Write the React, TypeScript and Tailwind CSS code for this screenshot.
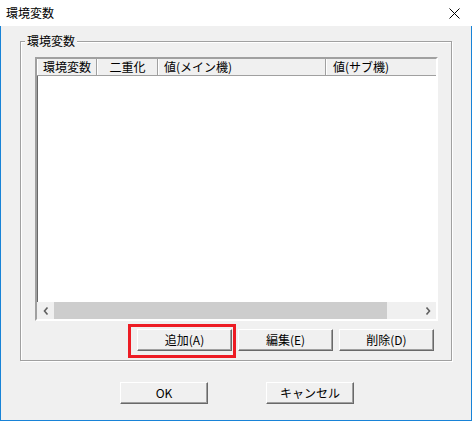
import React from 'react'

const columns = [
  { label: '環境変数', width: 'w-[60px]', align: 'justify-center' },
  { label: '二重化', width: 'w-[61px]', align: 'justify-center' },
  { label: '値(メイン機)', width: 'w-[168px]', align: 'justify-start pl-[5px]' },
  { label: '値(サブ機)', width: 'w-[120px]', align: 'justify-start pl-[6px]' },
]

const Button: React.FC<{ label: string; className?: string }> = ({ label, className = '' }) => (
  <div
    className={`relative h-[22px] flex items-center justify-center bg-[#f0f0f0] border border-t-white border-l-white border-r-[#696969] border-b-[#696969] shadow-[inset_-1px_-1px_0_#a0a0a0] text-[12px] leading-none text-black ${className}`}
  >
    {label}
  </div>
)

const Chevron: React.FC<{ dir: 'left' | 'right' }> = ({ dir }) => (
  <svg width="6" height="8" viewBox="0 0 6 8">
    <polyline
      points={dir === 'left' ? '4.5,0.5 1.5,4 4.5,7.5' : '1.5,0.5 4.5,4 1.5,7.5'}
      fill="none"
      stroke="#606060"
      strokeWidth="1.6"
    />
  </svg>
)

export default function App() {
  return (
    <div className="w-[473px] h-[421px] flex flex-col bg-white font-['Noto_Sans_CJK_JP',sans-serif] text-black">
      {/* title bar */}
      <div className="h-[26px] w-[473px] flex items-center justify-between bg-white">
        <span className="pl-[6px] text-[12px] leading-none">環境変数</span>
        <svg className="mr-[13px]" width="11" height="11" viewBox="0 0 11 11">
          <path d="M0.5 0.5 L10.5 10.5 M10.5 0.5 L0.5 10.5" stroke="#000" strokeWidth="1" />
        </svg>
      </div>

      <div className="flex-1 w-[472px] flex flex-col bg-[#f0f0f0] border-l border-r border-b border-[#1883d7]">
        {/* group box */}
        <div className="relative ml-[19px] mt-[15px] w-[432px] h-[320px] border border-[#a0a0a0] shadow-[inset_1px_1px_0_#fff,1px_1px_0_#fff] flex flex-col">
          <span className="absolute left-[4px] top-[-8px] px-[2px] bg-[#f0f0f0] text-[12px] leading-[14px]">
            環境変数
          </span>

          {/* list view */}
          <div className="ml-[14px] mt-[15px] w-[403px] h-[264px] flex flex-col bg-white border-2 border-t-[#a0a0a0] border-l-[#a0a0a0] border-r-white border-b-white shadow-[inset_1px_1px_0_#696969]">
            <div className="h-[17px] flex overflow-hidden bg-[#f0f0f0] border-b border-[#a0a0a0]">
              {columns.map((c) => (
                <div
                  key={c.label}
                  className={`${c.width} shrink-0 flex items-center ${c.align} border-l border-l-white border-r border-r-[#a0a0a0] text-[12px] leading-none whitespace-nowrap`}
                >
                  {c.label}
                </div>
              ))}
            </div>
            <div className="flex-1" />
            {/* horizontal scrollbar */}
            <div className="h-[17px] flex bg-[#f0f0f0]">
              <div className="w-[17px] flex items-center justify-center">
                <Chevron dir="left" />
              </div>
              <div className="flex-1 flex items-center">
                <div className="w-[333px] h-[17px] bg-[#cdcdcd]" />
              </div>
              <div className="w-[17px] flex items-center justify-center">
                <Chevron dir="right" />
              </div>
            </div>
          </div>

          {/* list buttons */}
          <div className="mt-[8px] mr-[17px] flex justify-end gap-[6px]">
            <div className="relative">
              <Button label="追加(A)" className="w-[95px]" />
              <div className="absolute left-[-9px] top-[-5px] right-[-4px] bottom-[-7px] border-[3px] border-[#ed1c24]" />
            </div>
            <Button label="編集(E)" className="w-[95px]" />
            <Button label="削除(D)" className="w-[95px]" />
          </div>
        </div>

        {/* dialog buttons */}
        <div className="mt-[21px] ml-[119px] flex gap-[58px]">
          <Button label="OK" className="w-[88px]" />
          <Button label="キャンセル" className="w-[88px]" />
        </div>
      </div>
    </div>
  )
}
